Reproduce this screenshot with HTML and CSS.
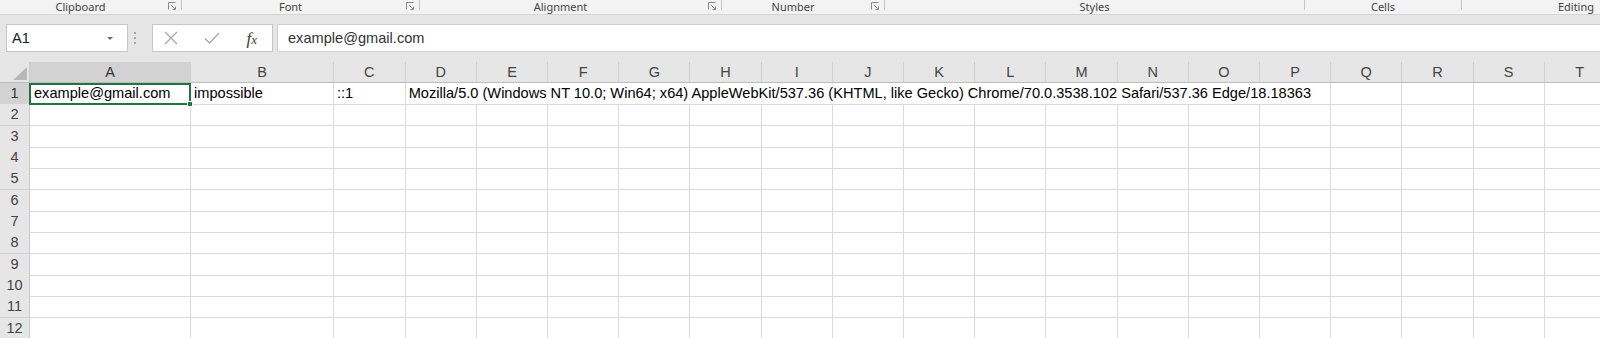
FILE: index.html
```html
<!DOCTYPE html>
<html lang="en">
<head>
<meta charset="utf-8">
<title>Book1 - Excel</title>
<link rel="stylesheet" href="styles.css">
</head>
<body>
<div class="app">
  <div class="ribbon">
    <div class="group g-clip"><span class="glabel">Clipboard</span><span class="launch"><svg viewBox="0 0 9 9" width="9" height="9"><path d="M0.5 7.5V0.5H7.5" fill="none" stroke="#8a8a8a"/><path d="M3 3L7.5 7.5M4.5 7.5H7.5V4.5" fill="none" stroke="#8a8a8a"/></svg></span><span class="sep"></span></div>
    <div class="group g-font"><span class="glabel">Font</span><span class="launch"><svg viewBox="0 0 9 9" width="9" height="9"><path d="M0.5 7.5V0.5H7.5" fill="none" stroke="#8a8a8a"/><path d="M3 3L7.5 7.5M4.5 7.5H7.5V4.5" fill="none" stroke="#8a8a8a"/></svg></span><span class="sep"></span></div>
    <div class="group g-align"><span class="glabel">Alignment</span><span class="launch"><svg viewBox="0 0 9 9" width="9" height="9"><path d="M0.5 7.5V0.5H7.5" fill="none" stroke="#8a8a8a"/><path d="M3 3L7.5 7.5M4.5 7.5H7.5V4.5" fill="none" stroke="#8a8a8a"/></svg></span><span class="sep"></span></div>
    <div class="group g-num"><span class="glabel">Number</span><span class="launch"><svg viewBox="0 0 9 9" width="9" height="9"><path d="M0.5 7.5V0.5H7.5" fill="none" stroke="#8a8a8a"/><path d="M3 3L7.5 7.5M4.5 7.5H7.5V4.5" fill="none" stroke="#8a8a8a"/></svg></span><span class="sep"></span></div>
    <div class="group g-styles"><span class="glabel">Styles</span><span class="sep"></span></div>
    <div class="group g-cells"><span class="glabel">Cells</span><span class="sep"></span></div>
    <div class="group g-edit"><span class="glabel">Editing</span></div>
  </div>

  <div class="fbar">
    <div class="namebox"><span class="nbtext">A1</span><span class="nbarrow"></span></div>
    <div class="grip"><span></span><span></span><span></span></div>
    <div class="fxbox">
      <svg class="ico" viewBox="0 0 14 14" width="14" height="14"><path d="M1 1L13 13M13 1L1 13" stroke="#a8a8a8" stroke-width="1.3" fill="none"/></svg>
      <svg class="ico" viewBox="0 0 16 14" width="16" height="14"><path d="M1 7.5L5.5 12L15 2" stroke="#a8a8a8" stroke-width="1.3" fill="none"/></svg>
      <span class="fx">f<span class="fxx">x</span></span>
    </div>
    <div class="finput">example@gmail.com</div>
  </div>

  <div class="sheet">
    <div class="row head">
      <div class="corner"><span class="tri"></span></div>
      <div class="ch sel">A</div><div class="ch">B</div><div class="ch">C</div><div class="ch">D</div><div class="ch">E</div><div class="ch">F</div><div class="ch">G</div><div class="ch">H</div><div class="ch">I</div><div class="ch">J</div><div class="ch">K</div><div class="ch">L</div><div class="ch">M</div><div class="ch">N</div><div class="ch">O</div><div class="ch">P</div><div class="ch">Q</div><div class="ch">R</div><div class="ch">S</div><div class="ch">T</div>
    </div>
    <div class="row">
      <div class="rh sel">1</div>
      <div class="c active">example@gmail.com<span class="handle"></span></div><div class="c">impossible</div><div class="c">::1</div><div class="c span13">Mozilla/5.0 (Windows NT 10.0; Win64; x64) AppleWebKit/537.36 (KHTML, like Gecko) Chrome/70.0.3538.102 Safari/537.36 Edge/18.18363</div><div class="c"></div><div class="c"></div><div class="c"></div><div class="c"></div>
    </div>
    <div class="row"><div class="rh">2</div><div class="c"></div><div class="c"></div><div class="c"></div><div class="c"></div><div class="c"></div><div class="c"></div><div class="c"></div><div class="c"></div><div class="c"></div><div class="c"></div><div class="c"></div><div class="c"></div><div class="c"></div><div class="c"></div><div class="c"></div><div class="c"></div><div class="c"></div><div class="c"></div><div class="c"></div><div class="c"></div></div>
    <div class="row"><div class="rh">3</div><div class="c"></div><div class="c"></div><div class="c"></div><div class="c"></div><div class="c"></div><div class="c"></div><div class="c"></div><div class="c"></div><div class="c"></div><div class="c"></div><div class="c"></div><div class="c"></div><div class="c"></div><div class="c"></div><div class="c"></div><div class="c"></div><div class="c"></div><div class="c"></div><div class="c"></div><div class="c"></div></div>
    <div class="row"><div class="rh">4</div><div class="c"></div><div class="c"></div><div class="c"></div><div class="c"></div><div class="c"></div><div class="c"></div><div class="c"></div><div class="c"></div><div class="c"></div><div class="c"></div><div class="c"></div><div class="c"></div><div class="c"></div><div class="c"></div><div class="c"></div><div class="c"></div><div class="c"></div><div class="c"></div><div class="c"></div><div class="c"></div></div>
    <div class="row"><div class="rh">5</div><div class="c"></div><div class="c"></div><div class="c"></div><div class="c"></div><div class="c"></div><div class="c"></div><div class="c"></div><div class="c"></div><div class="c"></div><div class="c"></div><div class="c"></div><div class="c"></div><div class="c"></div><div class="c"></div><div class="c"></div><div class="c"></div><div class="c"></div><div class="c"></div><div class="c"></div><div class="c"></div></div>
    <div class="row"><div class="rh">6</div><div class="c"></div><div class="c"></div><div class="c"></div><div class="c"></div><div class="c"></div><div class="c"></div><div class="c"></div><div class="c"></div><div class="c"></div><div class="c"></div><div class="c"></div><div class="c"></div><div class="c"></div><div class="c"></div><div class="c"></div><div class="c"></div><div class="c"></div><div class="c"></div><div class="c"></div><div class="c"></div></div>
    <div class="row"><div class="rh">7</div><div class="c"></div><div class="c"></div><div class="c"></div><div class="c"></div><div class="c"></div><div class="c"></div><div class="c"></div><div class="c"></div><div class="c"></div><div class="c"></div><div class="c"></div><div class="c"></div><div class="c"></div><div class="c"></div><div class="c"></div><div class="c"></div><div class="c"></div><div class="c"></div><div class="c"></div><div class="c"></div></div>
    <div class="row"><div class="rh">8</div><div class="c"></div><div class="c"></div><div class="c"></div><div class="c"></div><div class="c"></div><div class="c"></div><div class="c"></div><div class="c"></div><div class="c"></div><div class="c"></div><div class="c"></div><div class="c"></div><div class="c"></div><div class="c"></div><div class="c"></div><div class="c"></div><div class="c"></div><div class="c"></div><div class="c"></div><div class="c"></div></div>
    <div class="row"><div class="rh">9</div><div class="c"></div><div class="c"></div><div class="c"></div><div class="c"></div><div class="c"></div><div class="c"></div><div class="c"></div><div class="c"></div><div class="c"></div><div class="c"></div><div class="c"></div><div class="c"></div><div class="c"></div><div class="c"></div><div class="c"></div><div class="c"></div><div class="c"></div><div class="c"></div><div class="c"></div><div class="c"></div></div>
    <div class="row"><div class="rh">10</div><div class="c"></div><div class="c"></div><div class="c"></div><div class="c"></div><div class="c"></div><div class="c"></div><div class="c"></div><div class="c"></div><div class="c"></div><div class="c"></div><div class="c"></div><div class="c"></div><div class="c"></div><div class="c"></div><div class="c"></div><div class="c"></div><div class="c"></div><div class="c"></div><div class="c"></div><div class="c"></div></div>
    <div class="row"><div class="rh">11</div><div class="c"></div><div class="c"></div><div class="c"></div><div class="c"></div><div class="c"></div><div class="c"></div><div class="c"></div><div class="c"></div><div class="c"></div><div class="c"></div><div class="c"></div><div class="c"></div><div class="c"></div><div class="c"></div><div class="c"></div><div class="c"></div><div class="c"></div><div class="c"></div><div class="c"></div><div class="c"></div></div>
    <div class="row"><div class="rh">12</div><div class="c"></div><div class="c"></div><div class="c"></div><div class="c"></div><div class="c"></div><div class="c"></div><div class="c"></div><div class="c"></div><div class="c"></div><div class="c"></div><div class="c"></div><div class="c"></div><div class="c"></div><div class="c"></div><div class="c"></div><div class="c"></div><div class="c"></div><div class="c"></div><div class="c"></div><div class="c"></div></div>
  </div>
</div>
</body>
</html>
```
FILE: styles.css
```css
* { box-sizing: border-box; }
html, body { margin: 0; padding: 0; background: #ffffff; }
.app {
  width: 1600px;
  height: 338px;
  overflow: hidden;
  background: #e6e6e6;
  font-family: "Liberation Sans", Arial, sans-serif;
}

/* ribbon group labels */
.ribbon {
  display: flex;
  height: 15px;
  background: #f3f3f3;
  border-bottom: 1px solid #d5d5d5;
  font-family: "Noto Sans", "Open Sans", sans-serif;
  font-size: 11px;
  color: #444444;
}
.group { display: flex; align-items: flex-start; flex: none; }
.g-clip { width: 182px; }
.g-font { width: 238px; }
.g-align { width: 302px; }
.g-num { width: 163px; }
.g-styles { width: 420px; }
.g-cells { width: 157px; }
.g-edit { flex: 1; }
.glabel { flex: 1; text-align: center; line-height: 13px; white-space: nowrap; }
.g-edit .glabel { text-align: right; padding-right: 6px; }
.launch { width: 20px; height: 12px; display: flex; align-items: center; justify-content: flex-end; padding-right: 4px; }
.launch svg { display: block; }
.sep { width: 1px; height: 10px; background: #c6c6c6; }

/* formula bar */
.fbar {
  display: flex;
  align-items: stretch;
  height: 47px;
  padding: 9px 0 10px 6px;
}
.namebox {
  width: 122px;
  background: #ffffff;
  border: 1px solid #c6c6c6;
  display: flex;
  align-items: center;
  justify-content: space-between;
  padding: 0 14px 0 5px;
  font-size: 14.5px;
  color: #222222;
}
.nbarrow {
  width: 0; height: 0;
  border-left: 3px solid transparent;
  border-right: 3px solid transparent;
  border-top: 3px solid #6a6a6a;
}
.grip {
  width: 14px;
  margin-right: 10px;
  display: flex;
  flex-direction: column;
  align-items: center;
  justify-content: center;
  gap: 3px;
}
.grip span { width: 2px; height: 2px; background: #a6a6a6; }
.fxbox {
  width: 121px;
  background: #ffffff;
  border: 1px solid #c6c6c6;
  display: flex;
  align-items: center;
  padding: 0 15px 0 11px;
  justify-content: space-between;
}
.ico { display: block; }
.fx {
  font-family: "Liberation Serif", "Times New Roman", serif;
  font-style: italic;
  font-size: 17px;
  color: #3a3a3a;
  line-height: 1;
}
.fxx { font-size: 13px; }
.finput {
  flex: 1;
  margin-left: 4px;
  background: #ffffff;
  border: 1px solid #d0d0d0;
  border-right: none;
  display: flex;
  align-items: center;
  padding-left: 10px;
  font-size: 14.6px;
  color: #333333;
}

/* sheet grid */
.sheet { background: #ffffff; }
.row {
  display: grid;
  grid-template-columns: 30px 161px 143px 71.7px repeat(17, 71.2px);
  height: 21.33px;
}
.row.head { height: 21px; background: #e6e6e6; }
.corner {
  background: #e6e6e6;
  border-right: 1px solid #c9c9c9;
  border-bottom: 1px solid #bdbdbd;
  position: relative;
}
.tri {
  position: absolute;
  right: 2px;
  bottom: 2px;
  width: 14px;
  height: 13px;
  background: #b8b8b8;
  clip-path: polygon(100% 0, 100% 100%, 0 100%);
}
.ch {
  background: #e6e6e6;
  border-right: 1px solid #d0d0d0;
  border-bottom: 1px solid #bdbdbd;
  text-align: center;
  line-height: 20px;
  font-size: 14.5px;
  color: #444444;
}
.ch.sel { background: #d2d2d2; color: #333333; }
.rh {
  background: #e6e6e6;
  border-right: 1px solid #c9c9c9;
  border-bottom: 1px solid #d2d2d2;
  text-align: center;
  line-height: 21px;
  font-size: 14.5px;
  color: #444444;
}
.rh.sel { background: #d2d2d2; color: #333333; }
.c {
  border-right: 1px solid #dadada;
  border-bottom: 1px solid #dadada;
  padding-left: 3px;
  font-size: 14.6px;
  line-height: 21px;
  color: #000000;
  white-space: nowrap;
  overflow: visible;
}
.span13 { grid-column: span 13; }
.c.active {
  position: relative;
  border: 2px solid #217346;
  margin: 0 0 0 -1px;
  padding-left: 3px;
  line-height: 17px;
}
.handle {
  position: absolute;
  right: -4px;
  bottom: -4px;
  width: 6px;
  height: 6px;
  background: #217346;
  border: 1px solid #ffffff;
}
```
